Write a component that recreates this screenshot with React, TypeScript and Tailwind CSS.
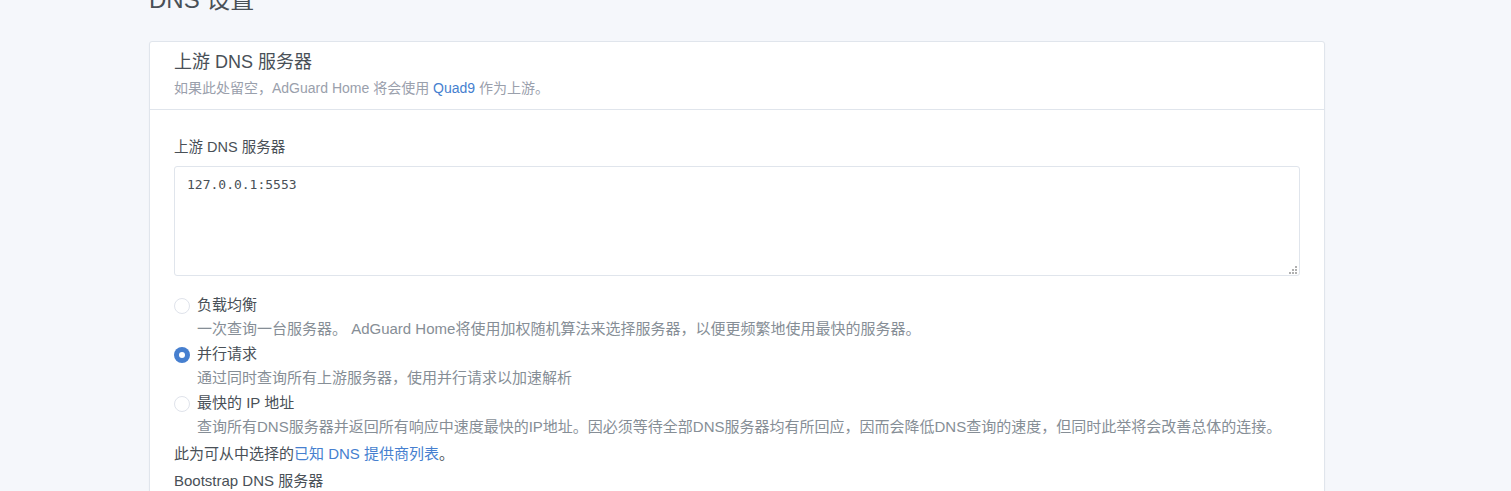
import React from "react";

const sans = "font-['Liberation_Sans','Noto_Sans_CJK_SC',sans-serif]";

const options = [
  {
    label: "负载均衡",
    desc: "一次查询一台服务器。 AdGuard Home将使用加权随机算法来选择服务器，以便更频繁地使用最快的服务器。",
    checked: false,
  },
  {
    label: "并行请求",
    desc: "通过同时查询所有上游服务器，使用并行请求以加速解析",
    checked: true,
  },
  {
    label: "最快的 IP 地址",
    desc: "查询所有DNS服务器并返回所有响应中速度最快的IP地址。因必须等待全部DNS服务器均有所回应，因而会降低DNS查询的速度，但同时此举将会改善总体的连接。",
    checked: false,
  },
];

const Radio = ({ checked }: { checked: boolean }) =>
  checked ? (
    <span className="mt-[5px] flex h-4 w-4 shrink-0 items-center justify-center rounded-full bg-[#467fcf]">
      <span className="h-[6px] w-[6px] rounded-full bg-white" />
    </span>
  ) : (
    <span className="mt-[5px] h-4 w-4 shrink-0 rounded-full border border-[#dfe3eb] bg-white" />
  );

const App = () => {
  return (
    <div className={`h-[491px] overflow-hidden bg-[#f5f7fb] ${sans}`}>
      <div className="ml-[149px] w-[1176px]">
        <h1 className="-mt-[20px] mb-[21px] h-[40px] text-[24px] leading-[40px] text-[#495057]">
          DNS 设置
        </h1>
        <div className="h-[600px] rounded-[3px] border border-[#e0e5ec] bg-white shadow-[0_1px_2px_rgba(0,0,0,0.04)]">
          <div className="border-b border-[#e0e5ec] px-6 pt-[7px] pb-[11px]">
            <h2 className="text-[18px] leading-[27px] text-[#495057]">上游 DNS 服务器</h2>
            <p className="mt-[2px] text-[14px] leading-[20px] text-[#9aa0ac]">
              如果此处留空，AdGuard Home 将会使用 <span className="text-[#467fcf]">Quad9</span> 作为上游。
            </p>
          </div>
          <div className="px-6 pt-[27px]">
            <label className="block text-[14.5px] leading-[21px] text-[#495057]">上游 DNS 服务器</label>
            <div className="relative mt-[8px]">
              <textarea
                readOnly
                defaultValue="127.0.0.1:5553"
                className="block h-[110px] w-full resize-none rounded-[3px] border border-[#e0e5ec] px-3 pt-[8px] font-['DejaVu_Sans_Mono',monospace] text-[13px] leading-[20px] text-[#495057] outline-none"
              />
              <svg className="absolute right-[3px] bottom-[2px]" width="9" height="9" viewBox="0 0 9 9">
                <g fill="#b0b0b0">
                  <rect x="7" y="1" width="2" height="2" />
                  <rect x="4" y="4" width="2" height="2" />
                  <rect x="7" y="4" width="2" height="2" />
                  <rect x="1" y="7" width="2" height="2" />
                  <rect x="4" y="7" width="2" height="2" />
                  <rect x="7" y="7" width="2" height="2" />
                </g>
              </svg>
            </div>

            <div className="mt-[17px] flex flex-col gap-[1px]">
              {options.map((o) => (
                <div key={o.label} className="flex gap-[7px]">
                  <Radio checked={o.checked} />
                  <div>
                    <div className="text-[15px] leading-[24px] text-[#495057]">{o.label}</div>
                    <div className="whitespace-nowrap text-[15px] leading-[24px] text-[#868e96]">{o.desc}</div>
                  </div>
                </div>
              ))}
            </div>

            <p className="mt-[3px] text-[15px] leading-[24px] text-[#495057]">
              此为可从中选择的<span className="text-[#467fcf]">已知 DNS 提供商列表</span>。
            </p>
            <p className="mt-[3px] text-[15px] leading-[24px] text-[#495057]">Bootstrap DNS 服务器</p>
          </div>
        </div>
      </div>
    </div>
  );
};

export default App;
